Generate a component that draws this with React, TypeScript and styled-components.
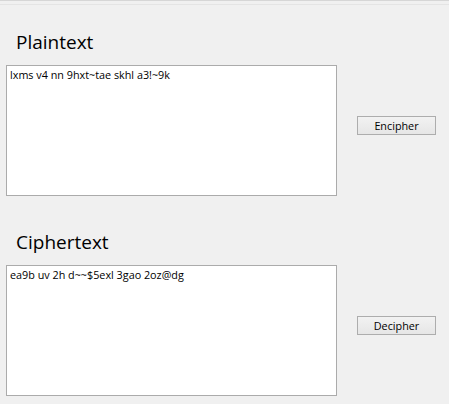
import React from "react";
import styled, { createGlobalStyle } from "styled-components";

const Global = createGlobalStyle`
  html, body { margin: 0; padding: 0; background: #f0f0f0; }
  body { font-family: "Open Sans", "Noto Sans", sans-serif; color: #000; }
`;

const Window = styled.div`
  width: 449px;
  height: 404px;
  box-sizing: border-box;
  border-top: 1px solid #d6d6d6;
  background: #f0f0f0;
  overflow: hidden;
`;

const TopLine = styled.div`
  height: 3px;
  border-bottom: 1px solid #e4e4e4;
`;

const Section = styled.section`
  display: flex;
  flex-direction: column;
  height: 200px;
`;

const Heading = styled.h2`
  margin: 0;
  padding: 24px 0 0 16px;
  height: 60px;
  box-sizing: border-box;
  font-family: "Open Sans", "Noto Sans", sans-serif;
  font-weight: 400;
  font-size: 19px;
  line-height: 26px;
  color: #000;
`;

const Row = styled.div`
  display: flex;
  align-items: flex-start;
  padding-left: 6px;
`;

const TextBox = styled.textarea`
  width: 331px;
  height: 131px;
  box-sizing: border-box;
  margin: 0;
  border: 1px solid #ababab;
  background: #fff;
  padding: 1px 3px;
  font-family: "Open Sans", "Noto Sans", sans-serif;
  font-size: 10.8px;
  line-height: 15px;
  color: #000;
  resize: none;
  outline: none;
  overflow: hidden;
`;

const Button = styled.button<{ $top: number }>`
  margin: ${(p) => p.$top}px 0 0 20px;
  width: 79px;
  height: 19px;
  box-sizing: border-box;
  border: 1px solid #adadad;
  background: linear-gradient(#f2f2f2, #e6e6e6);
  padding: 0;
  font-family: "Open Sans", "Noto Sans", sans-serif;
  font-size: 10.8px;
  line-height: 16px;
  color: #000;
`;

const sections = [
  { title: "Plaintext", text: "lxms v4 nn 9hxt~tae skhl a3!~9k", action: "Encipher" },
  { title: "Ciphertext", text: "ea9b uv 2h d~~$5exl 3gao 2oz@dg", action: "Decipher" },
];

export default function App() {
  return (
    <Window>
      <Global />
      <TopLine />
      {sections.map((s) => (
        <Section key={s.title}>
          <Heading>{s.title}</Heading>
          <Row>
            <TextBox readOnly defaultValue={s.text} spellCheck={false} />
            <Button $top={51}>{s.action}</Button>
          </Row>
        </Section>
      ))}
    </Window>
  );
}
